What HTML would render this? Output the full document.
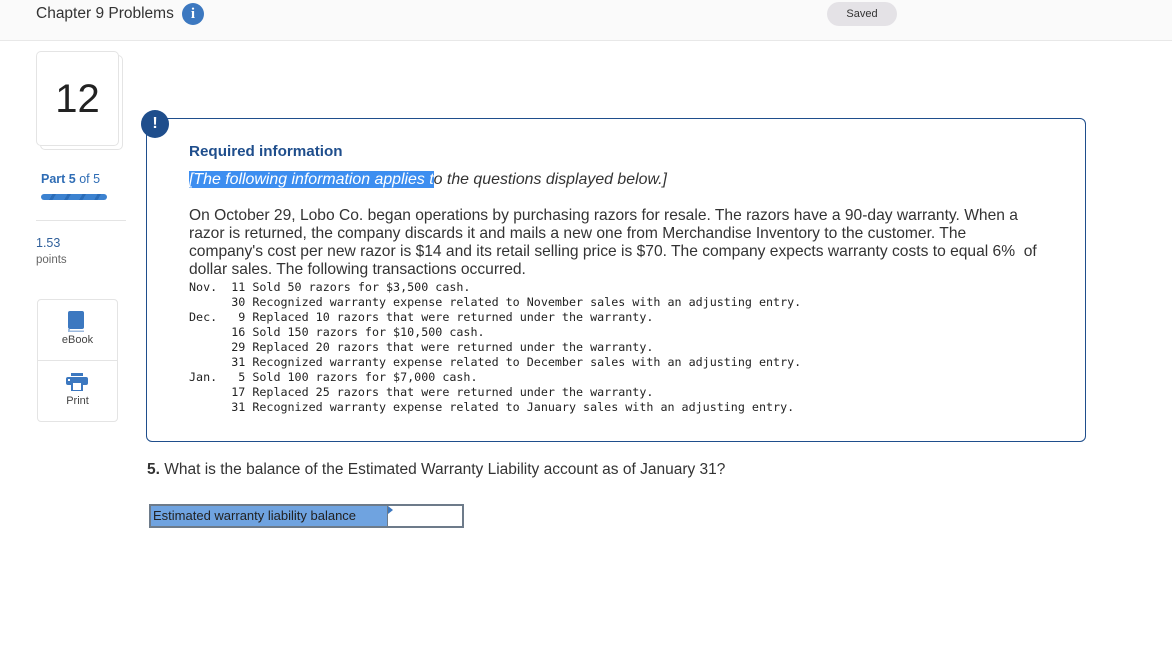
<!DOCTYPE html>
<html><head><meta charset="utf-8"><style>
*{margin:0;padding:0;box-sizing:border-box}
body{width:1172px;height:656px;background:#fff;font-family:"Liberation Sans",sans-serif;color:#333;position:relative;overflow:hidden}
.hdr{position:absolute;left:0;top:0;width:1172px;height:41px;background:#fafafa;border-bottom:1px solid #e8e8e8}
.abs{position:absolute;white-space:nowrap}
.mono{font-family:"DejaVu Sans Mono","Liberation Mono",monospace;font-size:11.7px;color:#222;line-height:15px;white-space:pre}
.body{font-size:15.6px;line-height:18px;color:#333}
</style></head><body>
<div class="hdr"></div>
<div class="abs" style="left:36px;top:5px;font-size:15.5px;color:#333">Chapter 9 Problems</div>
<div class="abs" style="left:182px;top:3px;width:22px;height:22px;border-radius:50%;background:#3c78c0;color:#fff;font:bold 15px 'Liberation Serif',serif;text-align:center;line-height:22px">i</div>
<div class="abs" style="left:827px;top:2px;width:70px;height:24px;border-radius:12px;background:#e4e2e6;font-size:11px;color:#333;text-align:center;line-height:24px">Saved</div>

<div class="abs" style="left:40px;top:55px;width:83px;height:95px;border:1px solid #e4e4e4;border-radius:5px"></div>
<div class="abs" style="left:36px;top:51px;width:83px;height:95px;border:1px solid #e4e4e4;border-radius:5px;background:#fff;font-size:40px;color:#222;text-align:center;line-height:95px">12</div>

<div class="abs" style="left:41px;top:172px;font-size:12.5px;color:#2f6db5"><b>Part 5</b> of 5</div>
<div class="abs" style="left:41px;top:194px;width:66px;height:6px;border-radius:3px;background:repeating-linear-gradient(120deg,#3c82d0 0 10px,#2a6cb8 10px 13px)"></div>
<div class="abs" style="left:36px;top:220px;width:90px;height:1px;background:#e4e4e4"></div>
<div class="abs" style="left:36px;top:236px;font-size:12.5px;color:#2f5f9a">1.53</div>
<div class="abs" style="left:36px;top:254px;font-size:11.5px;color:#666">points</div>

<div class="abs" style="left:37px;top:299px;width:81px;height:123px;border:1px solid #e4e4e4;border-radius:4px"></div>
<div class="abs" style="left:37px;top:360px;width:81px;height:1px;background:#e4e4e4"></div>
<svg class="abs" style="left:67px;top:311px" width="20" height="22" viewBox="0 0 20 22"><rect x="1" y="0" width="16" height="18" rx="2" fill="#3c78c0"/><rect x="1" y="18" width="16" height="3" fill="#9bb9de"/><rect x="3" y="18" width="14" height="1.5" fill="#fff"/></svg>
<div class="abs" style="left:0;width:155px;top:334px;font-size:11px;color:#444;text-align:center">eBook</div>
<svg class="abs" style="left:66px;top:373px" width="22" height="18" viewBox="0 0 22 18"><rect x="5" y="0" width="12" height="3" fill="#3c78c0"/><rect x="0" y="4" width="22" height="8" rx="2" fill="#3c78c0"/><rect x="6" y="9" width="10" height="9" fill="#fff" stroke="#3c78c0" stroke-width="2"/><rect x="2" y="6" width="2" height="2" fill="#fff"/></svg>
<div class="abs" style="left:0;width:155px;top:395px;font-size:11px;color:#444;text-align:center">Print</div>

<div class="abs" style="left:146px;top:118px;width:940px;height:324px;border:1px solid #1f4e8c;border-radius:6px"></div>
<div class="abs" style="left:141px;top:110px;width:28px;height:28px;border-radius:50%;background:#1f4e8c;color:#fff;font-weight:bold;font-size:16px;text-align:center;line-height:28px">!</div>
<div class="abs" style="left:189px;top:143px;font-size:15.2px;font-weight:bold;color:#1f4e8c">Required information</div>
<div class="abs" style="left:189px;top:170px;font-size:15.9px;font-style:italic;color:#333;line-height:19px"><span style="background:#3d8ef0;color:#fff">[The following information applies t</span>o the questions displayed below.]</div>
<div class="abs body" style="left:189px;top:207px">On October 29, Lobo Co. began operations by purchasing razors for resale. The razors have a 90-day warranty. When a<br>razor is returned, the company discards it and mails a new one from Merchandise Inventory to the customer. The<br>company's cost per new razor is $14 and its retail selling price is $70. The company expects warranty costs to equal 6%&nbsp; of<br>dollar sales. The following transactions occurred.</div>
<div class="abs mono" style="left:189px;top:280px">Nov.  11 Sold 50 razors for $3,500 cash.
      30 Recognized warranty expense related to November sales with an adjusting entry.
Dec.   9 Replaced 10 razors that were returned under the warranty.
      16 Sold 150 razors for $10,500 cash.
      29 Replaced 20 razors that were returned under the warranty.
      31 Recognized warranty expense related to December sales with an adjusting entry.
Jan.   5 Sold 100 razors for $7,000 cash.
      17 Replaced 25 razors that were returned under the warranty.
      31 Recognized warranty expense related to January sales with an adjusting entry.</div>

<div class="abs" style="left:147px;top:461px;font-size:15.5px;color:#333"><b>5.</b> What is the balance of the Estimated Warranty Liability account as of January 31?</div>
<div class="abs" style="left:149px;top:504px;width:315px;height:24px;border:2px solid #6d7b8a;background:#6fa3e0"></div>
<div class="abs" style="left:153px;top:508px;font-size:13px;color:#222">Estimated warranty liability balance</div>
<div class="abs" style="left:387px;top:506px;width:75px;height:20px;background:#fff;border-left:1px solid #6d7b8a"></div>
<div class="abs" style="left:388px;top:506px;width:0;height:0;border-top:4px solid transparent;border-bottom:4px solid transparent;border-left:5px solid #3c78c0"></div>
</body></html>
